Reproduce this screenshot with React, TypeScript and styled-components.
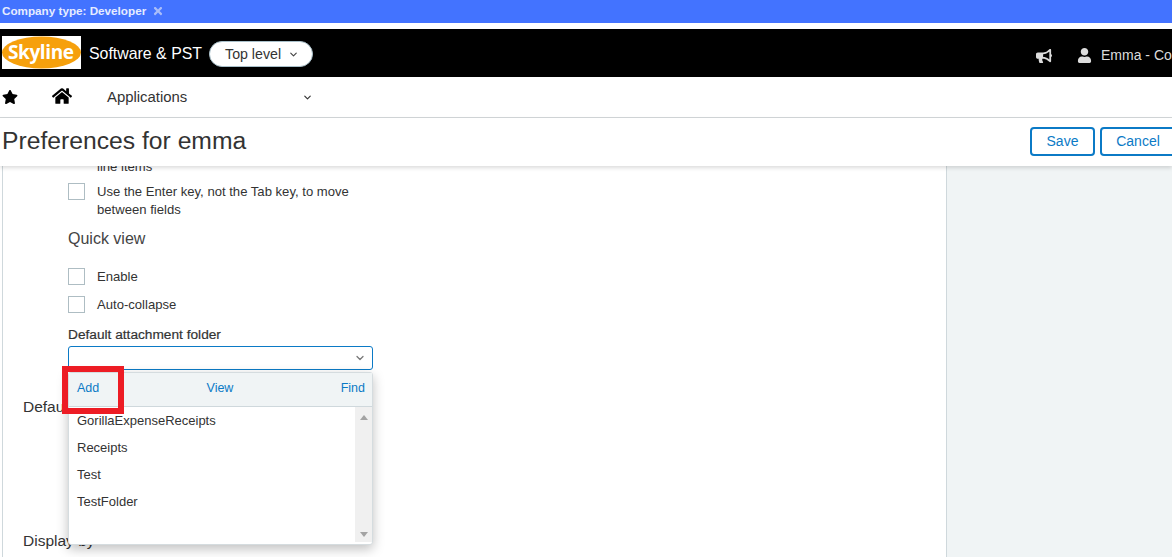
import React from "react";
import styled, { createGlobalStyle } from "styled-components";
import { FaBullhorn, FaHome, FaStar, FaTimes, FaUser } from "react-icons/fa";
import { ChevronDown } from "lucide-react";

const GlobalStyle = createGlobalStyle`
  html, body {
    margin: 0;
    padding: 0;
    height: 100%;
    overflow: hidden;
    background: #fff;
    font-family: "Liberation Sans", Arial, sans-serif;
  }
`;

const Page = styled.div`
  width: 1172px;
  height: 557px;
  display: flex;
  flex-direction: column;
  overflow: hidden;
`;

const Banner = styled.div`
  height: 23px;
  flex: none;
  margin-bottom: 6px;
  background: #4373ff;
  color: #e6ecff;
  font-size: 11.7px;
  font-weight: bold;
  display: flex;
  align-items: center;
  gap: 6px;
  padding: 0 0 2px 2px;
  box-sizing: border-box;

  svg {
    color: #a9bdf9;
  }
`;

const TopBar = styled.div`
  height: 48px;
  flex: none;
  background: #000;
  display: flex;
  align-items: center;
  padding-left: 2px;
`;

const Logo = styled.svg`
  display: block;
  margin-top: -1px;
`;

const CompanyName = styled.span`
  color: #fff;
  font-size: 15.9px;
  margin-left: 8px;
  margin-top: 1px;
  white-space: nowrap;
`;

const LevelPill = styled.div`
  margin-left: 7px;
  margin-top: 2px;
  width: 104px;
  height: 26px;
  box-sizing: border-box;
  border: 1px solid #a9c0ca;
  border-radius: 13px;
  background: #fff;
  color: #333;
  font-size: 14.2px;
  display: flex;
  align-items: center;
  padding-left: 15px;
  gap: 7px;
`;

const UserArea = styled.div`
  margin-left: auto;
  width: 136px;
  overflow: hidden;
  display: flex;
  align-items: center;
  color: #dcdcdc;
  font-size: 14px;
  white-space: nowrap;
  padding-top: 5px;
  box-sizing: border-box;
`;

const UserIcon = styled(FaUser)`
  margin-left: 25px;
  margin-right: 9px;
  flex: none;
`;

const UserName = styled.span`
  margin-top: -1px;
`;

const NavBar = styled.div`
  height: 40px;
  flex: none;
  border-bottom: 1px solid #d3d7d9;
  display: flex;
  align-items: center;
  padding-left: 2px;
  color: #000;
`;

const HomeLink = styled.span`
  margin-left: 34px;
  display: flex;
  margin-top: -3px;
`;

const AppsLabel = styled.span`
  margin-left: 35px;
  width: 195px;
  font-size: 14.9px;
  color: #333;
`;

const TitleBar = styled.div`
  height: 48px;
  flex: none;
  display: flex;
  align-items: center;
  padding-left: 2px;
  background: #fff;
  position: relative;
  z-index: 2;
  box-shadow: 0 2px 4px rgba(0, 0, 0, 0.14);
`;

const Title = styled.h1`
  margin: 0 0 2px;
  font-size: 24.7px;
  font-weight: normal;
  color: #333;
`;

const Actions = styled.div`
  margin-left: auto;
  display: flex;
  gap: 5px;
  margin-right: -4px;
  margin-bottom: 2px;
`;

const ActionButton = styled.button<{ $width: number }>`
  width: ${(p) => p.$width}px;
  height: 29px;
  box-sizing: border-box;
  border: 2px solid #0b7ac6;
  border-radius: 4px;
  background: #fff;
  color: #0b7ac6;
  font-family: inherit;
  font-size: 14px;
  padding: 0;
`;

const Body = styled.div`
  flex: 1;
  min-height: 0;
  display: flex;
  overflow: hidden;
`;

const Main = styled.div`
  width: 943px;
  margin-left: 2px;
  flex: none;
  border-left: 1px solid #cfd8dc;
  border-right: 1px solid #cfd8dc;
  background: #fff;
  color: #333;
  font-size: 13.1px;
`;

const Side = styled.div`
  flex: 1;
  background: #f0f4f5;
`;

const Column = styled.div`
  width: 305px;
  margin-left: 65px;
  margin-top: -8px;
`;

const CheckRow = styled.label`
  display: flex;
  align-items: flex-start;
  gap: 12px;
  line-height: 18px;
  margin-bottom: 10px;
`;

const Box = styled.span`
  width: 17px;
  height: 17px;
  flex: none;
  box-sizing: border-box;
  border: 1px solid #aebdc3;
  background: #fff;
`;

const ClippedLine = styled.div`
  margin-left: 29px;
  line-height: 18px;
  height: 18px;
  margin-bottom: 7px;
`;

const SubHeading = styled.div`
  font-size: 16px;
  line-height: 20px;
  color: #444;
  margin: 10px 0 19px;
`;

const FieldLabel = styled.div`
  font-size: 13.7px;
  font-weight: 500;
  -webkit-text-stroke: 0.2px #333;
  line-height: 16px;
  margin-top: 13px;
  margin-bottom: 3px;
`;

const Field = styled.div`
  position: relative;
`;

const SelectBox = styled.div`
  height: 24px;
  box-sizing: border-box;
  border: 1px solid #0b7ac6;
  border-radius: 3px;
  display: flex;
  align-items: center;
  justify-content: flex-end;
  padding-right: 6px;
  color: #777;
`;

const Dropdown = styled.div`
  position: absolute;
  z-index: 3;
  left: 0;
  right: 0;
  top: 26px;
  height: 173px;
  box-sizing: border-box;
  border: 1px solid #d5dcdf;
  border-radius: 3px;
  background: #fff;
  box-shadow: 0 4px 12px rgba(0, 0, 0, 0.25);
  display: flex;
  flex-direction: column;
`;

const DropdownHead = styled.div`
  height: 34px;
  flex: none;
  box-sizing: border-box;
  background: #f0f4f5;
  border-bottom: 1px solid #cfd8dc;
  display: flex;
  align-items: center;
  justify-content: space-between;
  padding: 0 7px 4px 8px;
  color: #0b7ac6;
  font-size: 12.5px;
`;

const DropdownBody = styled.div`
  flex: 1;
  min-height: 0;
  display: flex;
`;

const OptionList = styled.div`
  flex: 1;
`;

const Option = styled.div`
  height: 27px;
  line-height: 27px;
  padding-left: 8px;
  font-size: 13px;
`;

const Scrollbar = styled.div`
  width: 17px;
  margin-bottom: 2px;
  background: #f0f0f0;
  display: flex;
  flex-direction: column;
  align-items: center;
  justify-content: space-between;
  padding: 8px 0 5px;
  box-sizing: border-box;
`;

const Arrow = styled.span<{ $down?: boolean }>`
  width: 0;
  height: 0;
  border-left: 4px solid transparent;
  border-right: 4px solid transparent;
  ${(p) =>
    p.$down ? "border-top: 5px solid #a3a3a3;" : "border-bottom: 5px solid #a3a3a3;"}
`;

const Highlight = styled.div`
  position: absolute;
  z-index: 4;
  left: -6px;
  top: 20px;
  width: 62px;
  height: 48px;
  box-sizing: border-box;
  border: 6px solid #ed1c24;
`;

const SectionHeading = styled.div<{ $top: number }>`
  font-size: 15.5px;
  line-height: 20px;
  margin-left: 20px;
  margin-top: ${(p) => p.$top}px;
`;

const App = () => {
  const folders = ["GorillaExpenseReceipts", "Receipts", "Test", "TestFolder"];

  return (
    <Page>
      <GlobalStyle />
      <Banner>
        Company type: Developer
        <FaTimes size={12} />
      </Banner>
      <TopBar>
        <Logo width="79" height="33" viewBox="0 0 79 33">
          <rect width="79" height="33" fill="#fff" />
          <ellipse cx="39.5" cy="16.5" rx="39.5" ry="16" fill="#f6a00c" />
          <text
            x="6"
            y="23"
            fill="#fff"
            fontFamily="'Open Sans', sans-serif"
            fontWeight="bold"
            fontSize="19"
            textLength="66"
          >
            Skyline
          </text>
        </Logo>
        <CompanyName>Software &amp; PST</CompanyName>
        <LevelPill>
          Top level
          <ChevronDown size={11} color="#444" strokeWidth={2.5} />
        </LevelPill>
        <UserArea>
          <FaBullhorn size={16} style={{ flex: "none" }} />
          <UserIcon size={15} />
          <UserName>Emma - Company</UserName>
        </UserArea>
      </TopBar>
      <NavBar>
        <FaStar size={16} />
        <HomeLink>
          <FaHome size={20} />
        </HomeLink>
        <AppsLabel>Applications</AppsLabel>
        <ChevronDown size={11} color="#333" strokeWidth={2.5} />
      </NavBar>
      <TitleBar>
        <Title>Preferences for emma</Title>
        <Actions>
          <ActionButton $width={65}>Save</ActionButton>
          <ActionButton $width={76}>Cancel</ActionButton>
        </Actions>
      </TitleBar>
      <Body>
        <Main>
          <Column>
            <ClippedLine>line items</ClippedLine>
            <CheckRow>
              <Box />
              <span>
                Use the Enter key, not the Tab key, to move between fields
              </span>
            </CheckRow>
            <SubHeading>Quick view</SubHeading>
            <CheckRow>
              <Box />
              <span>Enable</span>
            </CheckRow>
            <CheckRow>
              <Box />
              <span>Auto-collapse</span>
            </CheckRow>
            <FieldLabel>Default attachment folder</FieldLabel>
            <Field>
              <SelectBox>
                <ChevronDown size={12} strokeWidth={2.5} />
              </SelectBox>
              <Dropdown>
                <DropdownHead>
                  <span>Add</span>
                  <span>View</span>
                  <span>Find</span>
                </DropdownHead>
                <DropdownBody>
                  <OptionList>
                    {folders.map((name) => (
                      <Option key={name}>{name}</Option>
                    ))}
                  </OptionList>
                  <Scrollbar>
                    <Arrow />
                    <Arrow $down />
                  </Scrollbar>
                </DropdownBody>
              </Dropdown>
              <Highlight />
            </Field>
          </Column>
          <SectionHeading $top={27}>Default</SectionHeading>
          <SectionHeading $top={114}>Display by</SectionHeading>
        </Main>
        <Side />
      </Body>
    </Page>
  );
};

export default App;
